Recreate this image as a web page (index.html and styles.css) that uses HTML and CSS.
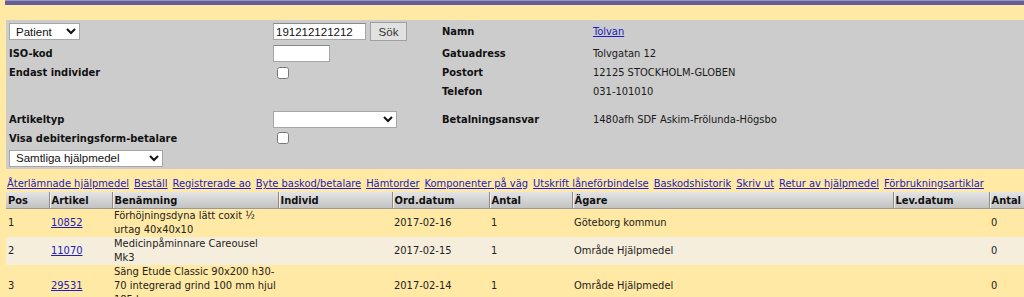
FILE: index.html
```html
<!DOCTYPE html>
<html>
<head>
  <title>Hjälpmedel - Patient</title>
  <link rel="stylesheet" href="styles.css">
</head>
<body>
  <div class="topbar"></div>
  <div class="topspace"></div>

  <form class="search-panel" method="post">
    <div class="cell">
      <select class="sel-type" name="searchType">
        <option>Patient</option>
        <option>Individ</option>
      </select>
    </div>
    <div class="cell">
      <input type="text" class="in-pnr" name="pnr" value="191212121212">
      <button type="submit" class="btn-search">Sök</button>
    </div>
    <div class="cell label">Namn</div>
    <div class="cell"><a href="#">Tolvan</a></div>

    <div class="cell label">ISO-kod</div>
    <div class="cell"><input type="text" class="in-iso" name="iso"></div>
    <div class="cell label">Gatuadress</div>
    <div class="cell">Tolvgatan 12</div>

    <div class="cell label">Endast individer</div>
    <div class="cell"><input type="checkbox" name="onlyIndivid"></div>
    <div class="cell label">Postort</div>
    <div class="cell">12125 STOCKHOLM-GLOBEN</div>

    <div class="cell"></div>
    <div class="cell"></div>
    <div class="cell label">Telefon</div>
    <div class="cell">031-101010</div>

    <div class="gap-row"></div>

    <div class="cell label">Artikeltyp</div>
    <div class="cell">
      <select class="sel-article" name="articleType">
        <option></option>
      </select>
    </div>
    <div class="cell label">Betalningsansvar</div>
    <div class="cell">1480afh SDF Askim-Frölunda-Högsbo</div>

    <div class="cell label">Visa debiteringsform-betalare</div>
    <div class="cell"><input type="checkbox" name="showPayer"></div>
    <div class="cell"></div>
    <div class="cell"></div>

    <div class="cell">
      <select class="sel-all" name="filter">
        <option>Samtliga hjälpmedel</option>
      </select>
    </div>
  </form>

  <div class="actions">
    <a href="#">Återlämnade hjälpmedel</a>
    <a href="#">Beställ</a>
    <a href="#">Registrerade ao</a>
    <a href="#">Byte baskod/betalare</a>
    <a href="#">Hämtorder</a>
    <a href="#">Komponenter på väg</a>
    <a href="#">Utskrift låneförbindelse</a>
    <a href="#">Baskodshistorik</a>
    <a href="#">Skriv ut</a>
    <a href="#">Retur av hjälpmedel</a>
    <a href="#">Förbrukningsartiklar</a>
  </div>

  <table class="items">
    <colgroup>
      <col style="width:43px">
      <col style="width:63px">
      <col style="width:166px">
      <col style="width:114px">
      <col style="width:97px">
      <col style="width:83px">
      <col style="width:321px">
      <col style="width:96px">
      <col style="width:60px">
    </colgroup>
    <thead>
      <tr>
        <th>Pos</th>
        <th>Artikel</th>
        <th>Benämning</th>
        <th>Individ</th>
        <th>Ord.datum</th>
        <th>Antal</th>
        <th>Ägare</th>
        <th>Lev.datum</th>
        <th>Antal</th>
      </tr>
    </thead>
    <tbody>
      <tr>
        <td>1</td>
        <td><a href="#">10852</a></td>
        <td>Förhöjningsdyna lätt coxit ½ urtag 40x40x10</td>
        <td></td>
        <td>2017-02-16</td>
        <td>1</td>
        <td>Göteborg kommun</td>
        <td></td>
        <td>0</td>
      </tr>
      <tr class="alt">
        <td>2</td>
        <td><a href="#">11070</a></td>
        <td>Medicinpåminnare Careousel Mk3</td>
        <td></td>
        <td>2017-02-15</td>
        <td>1</td>
        <td>Område Hjälpmedel</td>
        <td></td>
        <td>0</td>
      </tr>
      <tr>
        <td>3</td>
        <td><a href="#">29531</a></td>
        <td>Säng Etude Classic 90x200 h30-70 integrerad grind 100 mm hjul 185 kg</td>
        <td></td>
        <td>2017-02-14</td>
        <td>1</td>
        <td>Område Hjälpmedel</td>
        <td></td>
        <td>0</td>
      </tr>
    </tbody>
  </table>
</body>
</html>
```

FILE: styles.css
```css
/* page base */
html, body {
  overflow: hidden;
}

body {
  margin: 0;
  padding: 0 0 0 6px;
  background-color: #ffe9a4;
  font-family: Tahoma, "DejaVu Sans Condensed", "DejaVu Sans", sans-serif;
  font-stretch: condensed;
  font-size: 11px;
  color: #1a1a1a;
}

a {
  color: #2020c0;
}

.topbar {
  height: 4px;
  margin-left: -1px;
  border-top: 1px solid #9a96b8;
  background-color: #655e9a;
}

.topspace {
  height: 15px;
}

/* search / patient panel */
.search-panel {
  display: grid;
  grid-template-columns: 264px 169px 151px 1fr;
  grid-template-rows: 23px 20px 19px 18px 10px 19px 18px 22px;
  align-items: center;
  margin: 0;
  padding-left: 3px;
  background-color: #cccccc;
}

.search-panel .cell {
  display: flex;
  align-items: center;
}

.search-panel .label {
  font-weight: bold;
  color: #111;
}

.search-panel .gap-row {
  grid-column: 1 / -1;
}

.search-panel select,
.search-panel input[type=text],
.search-panel button {
  font-family: "Liberation Sans", Arial, sans-serif;
  font-stretch: normal;
  font-size: 11.5px;
  box-sizing: border-box;
  margin: 0;
}

.search-panel select {
  height: 17px;
  padding: 0 0 0 2px;
  border: 1px solid #a6a6a6;
  border-radius: 0;
  background-color: #fff;
  color: #111;
}

.sel-type {
  width: 71px;
}

.sel-article {
  width: 124px;
}

.sel-all {
  width: 154px;
}

.search-panel input[type=text] {
  height: 17px;
  padding: 0 2px;
  border: 1px solid #a6a6a6;
  border-top-color: #8a8a8a;
  background-color: #fff;
  color: #111;
}

.in-pnr {
  width: 93px;
}

.in-iso {
  width: 57px;
}

.btn-search {
  width: 37px;
  height: 19px;
  margin-left: 4px !important;
  padding: 0;
  border: 1px solid #a0a0a0;
  background-color: #e1e1e1;
  color: #333;
}

.search-panel input[type=checkbox] {
  width: 12px;
  height: 12px;
  margin: 0 0 0 4px;
}

/* action links */
.actions {
  display: flex;
  gap: 5px;
  padding: 8px 0 1px 1px;
  line-height: 14px;
  white-space: nowrap;
}

/* article table */
.items {
  width: 1043px;
  table-layout: fixed;
  border-collapse: collapse;
}

.items th {
  height: 16px;
  padding: 0 2px;
  text-align: left;
  font-weight: bold;
  color: #111;
  background: linear-gradient(#e4e4e4, #c2c2c2);
  border-bottom: 1px solid #9a9a9a;
  border-left: 1px solid #8c8c8c;
  box-shadow: inset 1px 0 0 #f0f0f0;
}

.items th:first-child {
  border-left: none;
  box-shadow: none;
}

.items td {
  height: 28px;
  padding: 0 2px;
  line-height: 14px;
  vertical-align: middle;
  color: #222;
}

.items tr.alt td {
  background-color: #f6eedd;
}
```
